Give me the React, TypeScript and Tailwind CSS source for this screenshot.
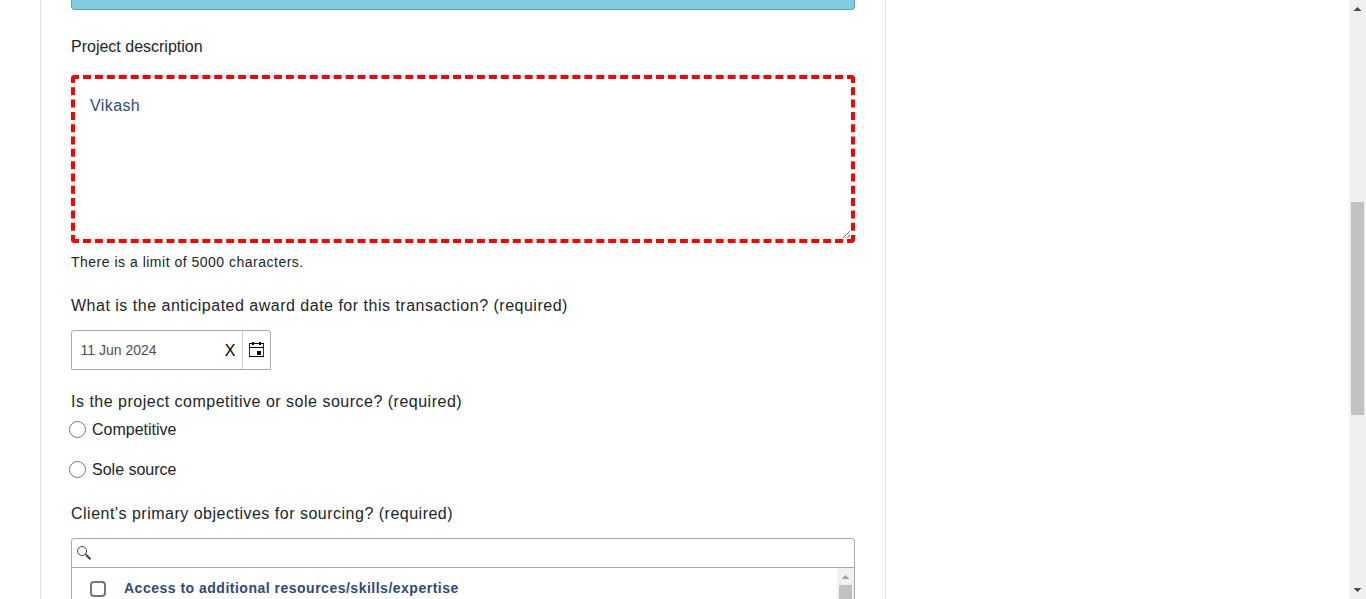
import React from "react";

function Arrow({ down = false, color }: { down?: boolean; color: string }) {
  return (
    <svg width="7" height="4" viewBox="0 0 7 4" shapeRendering="crispEdges" fill={color} className={down ? "rotate-180" : ""}>
      <path d="M3 0h1v1h1v1h1v1h1v1H0V3h1V2h1V1h1z" />
    </svg>
  );
}

function CalendarIcon() {
  return (
    <svg width="15" height="15" viewBox="0 0 15 15" shapeRendering="crispEdges" fill="#000">
      <path d="M0 1h15v1H0zM0 5h15v1H0zM0 14h15v1H0z" />
      <path d="M0 1h1v14H0zM14 1h1v14h-1z" fillOpacity="0.8" />
      <path d="M3 0h2v3H3zM10 0h2v3h-2zM8 9h4v4H8z" />
    </svg>
  );
}

function SearchIcon() {
  return (
    <svg width="15" height="15" viewBox="0 0 15 15" fill="none" stroke="#444">
      <circle cx="5.1" cy="5" r="4.5" strokeWidth="1" />
      <path d="M8.4 8.3L9.8 9.6" strokeWidth="1.4" />
      <path d="M9.4 9.2L13.5 13.2" strokeWidth="2.2" />
    </svg>
  );
}

function RadioRow({ label }: { label: string }) {
  return (
    <label className="-ml-0.5 flex h-6 items-center">
      <input
        type="radio"
        name="sourcing"
        className="size-[17px] appearance-none rounded-full border border-[#767676] bg-white"
      />
      <span className="ml-1.5 pt-0.5">{label}</span>
    </label>
  );
}

export default function App() {
  return (
    <div className="flex h-[599px] overflow-hidden bg-white font-['Liberation_Sans',Arial,sans-serif] text-base leading-6 text-[#212529]">
      <main className="ml-10 flex w-[846px] flex-none flex-col border-x border-[#dfdfe3] px-[30px]">
        <div className="h-2.5 flex-none rounded-b border border-t-0 border-[#62a2b7] bg-[#80cde3]" />
        <label className="mt-[25px] h-6 flex-none">Project description</label>
        <textarea
          defaultValue="Vikash"
          className="mt-4 block h-[168px] w-full flex-none resize rounded border-4 border-dashed border-[#ff0000] px-[15px] pt-[15px] pb-3 tracking-[0.4px] text-[#2d4a7c] outline-none"
        />
        <p className="mt-[9px] h-5 flex-none text-sm leading-5 tracking-[0.5px]">There is a limit of 5000 characters.</p>
        <p className="mt-[22px] h-6 flex-none tracking-[0.5px]">
          What is the anticipated award date for this transaction? (required)
        </p>
        <div className="mt-3 flex h-10 w-[200px] flex-none rounded-t-[3px] rounded-b-[1px] border border-[#a9a9a9]">
          <span className="flex flex-1 items-center pl-[8.5px] text-sm text-[#495057]">11 Jun 2024</span>
          <button className="w-6 pt-0.5 text-base text-black">X</button>
          <button className="flex w-7 items-center justify-center border-l border-[#d0d0d0] pb-px">
            <CalendarIcon />
          </button>
        </div>
        <p className="mt-5 h-6 flex-none tracking-[0.5px]">Is the project competitive or sole source? (required)</p>
        <div className="mt-[3px] flex flex-none flex-col gap-4">
          <RadioRow label="Competitive" />
          <RadioRow label="Sole source" />
        </div>
        <p className="mt-[21px] h-6 flex-none tracking-[0.5px]">Client's primary objectives for sourcing? (required)</p>
        <div className="mt-3 h-[120px] flex-none rounded-t-[3px] border border-[#a9a9a9]">
          <div className="flex h-[29px] items-center border-b border-[#a9a9a9] pl-[5px]">
            <SearchIcon />
          </div>
          <div className="flex h-[90px]">
            <label className="flex h-10 flex-1 items-center pl-[18px] text-sm font-bold tracking-[0.5px] text-[#2d4a7c]">
              <input
                type="checkbox"
                className="mt-0.5 size-4 appearance-none rounded-[4px] border-2 border-[#767676] bg-white"
              />
              <span className="ml-[18px]">Access to additional resources/skills/expertise</span>
            </label>
            <div className="flex w-[17px] flex-col items-center bg-[#f0f0f0]">
              <div className="flex h-[17px] flex-none items-start pt-[7px]">
                <Arrow color="#a3a3a3" />
              </div>
              <div className="w-[13px] flex-1 bg-[#c1c1c1]" />
            </div>
          </div>
        </div>
      </main>
      <aside className="ml-auto flex w-[17px] flex-none flex-col items-center bg-[#f0f0f0]">
        <div className="flex h-[17px] items-start pt-[7px]">
          <Arrow color="#505050" />
        </div>
        <div className="mt-[185px] h-[213px] w-[13px] bg-[#c1c1c1]" />
        <div className="mt-auto flex h-[17px] items-start pt-1.5">
          <Arrow down color="#505050" />
        </div>
      </aside>
    </div>
  );
}
